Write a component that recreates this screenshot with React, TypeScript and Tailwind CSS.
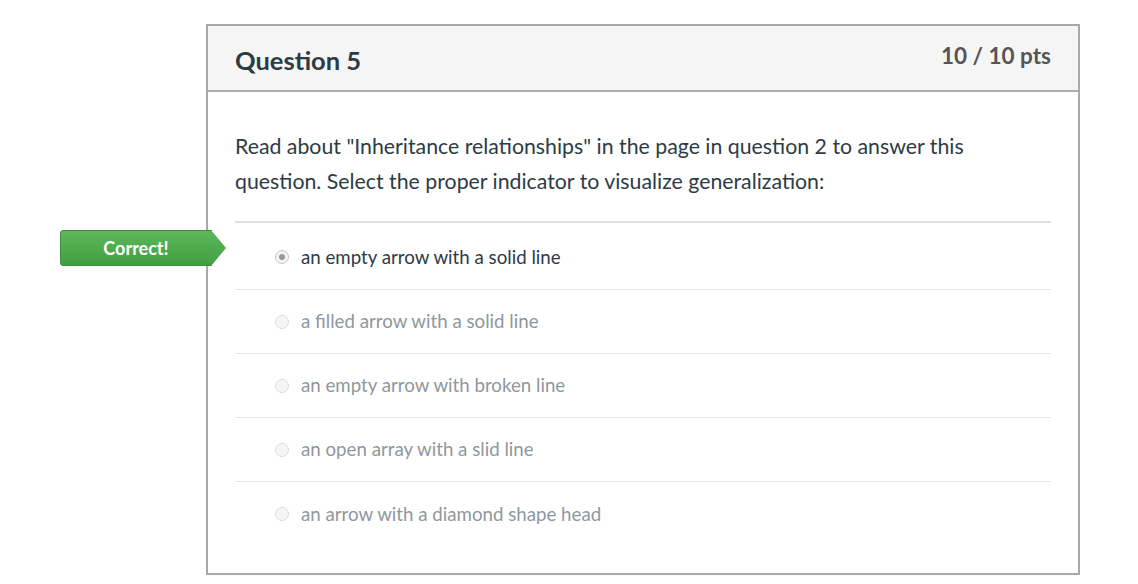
import React from "react";

const answers = [
  { text: "an empty arrow with a solid line", selected: true },
  { text: "a filled arrow with a solid line", selected: false },
  { text: "an empty arrow with broken line", selected: false },
  { text: "an open array with a slid line", selected: false },
  { text: "an arrow with a diamond shape head", selected: false },
];

function Radio({ selected }: { selected: boolean }) {
  return (
    <span
      className={`flex h-[14px] w-[14px] items-center justify-center rounded-full border ${
        selected ? "border-[#c8c8c8] bg-[#f3f3f3]" : "border-[#dcdcdc] bg-[#f6f6f6]"
      }`}
    >
      {selected && <span className="h-[6px] w-[6px] rounded-full bg-[#9a9a9a]" />}
    </span>
  );
}

export default function App() {
  return (
    <div
      className="min-h-[584px] bg-white pt-6 pl-[206px]"
      style={{ fontFamily: "Lato, 'Open Sans', sans-serif" }}
    >
      <div className="relative w-[874px] border-2 border-[#a9a9a9]">
        <div className="flex h-[66px] items-start justify-between border-b-2 border-[#acacac] bg-[#f5f5f5] px-[27px]">
          <h2 className="pt-[19px] text-[25.5px] font-bold leading-[30px] text-[#2d3b45]">Question 5</h2>
          <div className="pt-[16px] text-[22.5px] font-bold leading-[28px] text-[#555555]">10 / 10 pts</div>
        </div>
        <div className="px-[27px] pt-[37px] pb-[27px]">
          <p className="text-[21.3px] leading-[35px] text-[#2d3b45]">
            Read about "Inheritance relationships" in the page in question 2 to answer this
            <br />
            question. Select the proper indicator to visualize generalization:
          </p>
          <div className="mt-[22px] border-t-2 border-[#dedede]">
            {answers.map((a, i) => (
              <div
                key={i}
                className={`flex items-center pl-[40px] ${
                  i < answers.length - 1 ? "border-b border-[#e6e6e6]" : ""
                } ${i === 0 ? "h-[67px] pt-[2px]" : "h-[64px]"}`}
              >
                <Radio selected={a.selected} />
                <span
                  className={`ml-[12px] text-[18.7px] ${
                    a.selected ? "text-[#2d3b45]" : "text-[#8f979d]"
                  }`}
                >
                  {a.text}
                </span>
              </div>
            ))}
          </div>
        </div>
        <div className="absolute left-[-148px] top-[204px] flex h-[36px] items-center">
          <div className="flex h-[36px] w-[152px] items-center justify-center rounded-l-[3px] border border-[#3e8e3e] bg-gradient-to-b from-[#5db85c] to-[#419e41] text-[18px] font-bold text-white">
            Correct!
          </div>
          <svg width="16" height="36" viewBox="0 0 16 36" className="-ml-[1px]">
            <defs>
              <linearGradient id="g" x1="0" y1="0" x2="0" y2="1">
                <stop offset="0" stopColor="#5db85c" />
                <stop offset="1" stopColor="#419e41" />
              </linearGradient>
            </defs>
            <polygon points="0,0 15,18 0,36" fill="url(#g)" />
          </svg>
        </div>
      </div>
    </div>
  );
}
